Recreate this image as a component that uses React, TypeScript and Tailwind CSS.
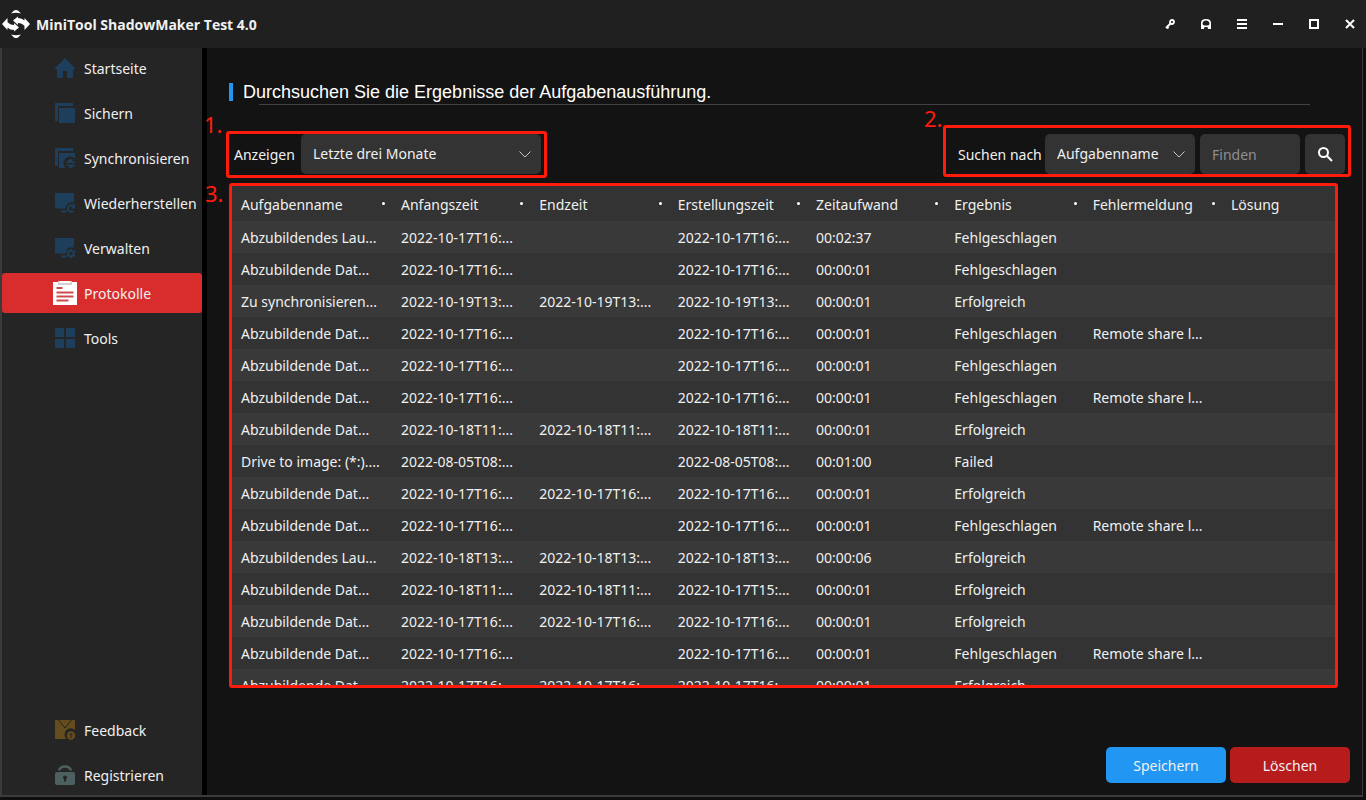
import type { ReactNode } from "react";

type NavItem = {
  label: string;
  icon: ReactNode;
  active?: boolean;
};

type LogRow = {
  name: string;
  start: string;
  end: string;
  created: string;
  duration: string;
  result: string;
  error: string;
};

const HomeIcon = () => (
  <svg viewBox="0 0 20 20" className="size-5 fill-[#1d3f5c]">
    <path d="M10 0 20 10V11H18V18.500Q18 20 16.500 20H12V13H8V20H3.500Q2 20 2 18.500V11H0V10Z" />
  </svg>
);

const BackupIcon = () => (
  <svg viewBox="0 0 20 20" className="size-5 fill-[#1d3f5c]">
    <path d="M0 0H18V3H3V18H0Z" />
    <path d="M4 5H20V20H4Z" />
  </svg>
);

const SyncIcon = () => (
  <svg viewBox="0 0 20 20" className="size-5 fill-[#1d3f5c]">
    <path d="M0 0H18V3H3V18H0Z" />
    <path d="M4 5H20V10.500A6 6 0 0 0 10.500 20H4Z" />
    <path d="M11.500 15A4.500 4.500 0 0 1 18 11.500L17 13.500H20V15Z" />
    <path d="M20 16.500A4.500 4.500 0 0 1 13.500 19.500L14.500 18H11.500V16.500Z" />
  </svg>
);

const RestoreIcon = () => (
  <svg viewBox="0 0 20 20" className="size-5 fill-[#1d3f5c]">
    <path d="M0 0H19V9.500A6.500 6.500 0 0 0 10.500 15.500H0Z" />
    <path d="M6 17.500H11.500V19.500H6Z" />
    <path
      d="M18.500 13.500A3.200 3.200 0 1 0 18.500 17.500M19.500 11V14.500H16.500"
      className="fill-none stroke-[#1d3f5c] stroke-2"
    />
  </svg>
);

const ManageIcon = () => (
  <svg viewBox="0 0 20 20" className="size-5 fill-[#1d3f5c]">
    <path d="M0 0H19V9.500A6.500 6.500 0 0 0 10.500 15.500H0Z" />
    <path d="M6 17.500H11.500V19.500H6Z" />
    <circle cx="16" cy="15.500" r="2.700" className="fill-none stroke-[#1d3f5c] stroke-2" />
    <path
      d="M16 11v1.500M16 18.500V20M12 13.200l1.400.8M18.600 17l1.400.8M12 17.800l1.400-.8M18.600 14l1.400-.8"
      className="stroke-[#1d3f5c] stroke-2"
    />
  </svg>
);

const LogsIcon = () => (
  <svg viewBox="0 0 24 24" className="size-6">
    <path d="M0 1H24V24H0Z" fill="#fff" />
    <path d="M5 0H7V2H17V0H19V4H5Z" fill="#d8d0d0" />
    <path d="M7 0H17V2H7Z" fill="#fff" />
    <path d="M3.500 7H9.500M3.500 11.500H20.500M3.500 15.500H20.500M3.500 19.500H15.500" stroke="#cf4b4b" strokeWidth="1.800" />
  </svg>
);

const ToolsIcon = () => (
  <svg viewBox="0 0 20 20" className="size-5 fill-[#1d3f5c]">
    <path d="M0 0H9V9H0ZM11 0H20V9H11ZM0 11H9V20H0ZM11 11H20V20H11Z" />
  </svg>
);

const FeedbackIcon = () => (
  <svg viewBox="0 0 20 20" className="size-5">
    <path d="M0 0H20V10A5.500 5.500 0 0 0 11.500 19H0Z" fill="#644c1d" />
    <path d="M3.500 0 10 8 16.500 0" fill="none" stroke="#252525" />
    <circle cx="16" cy="15.500" r="4.200" fill="#644c1d" />
    <path d="M16 18V13.500M14.500 15 16 13.500 17.500 15" fill="none" stroke="#252525" />
  </svg>
);

const RegisterIcon = () => (
  <svg viewBox="0 0 20 20" className="size-5">
    <path d="M4 5.500A6.200 5.200 0 0 1 16 5.500" fill="none" stroke="#4d6060" strokeWidth="2.500" />
    <rect y="7" width="20" height="13" rx="2" fill="#4d6060" />
    <circle cx="10" cy="12.500" r="2" fill="#252525" />
    <path d="M9 13H11V16.500H9Z" fill="#252525" />
  </svg>
);

const mainNav: NavItem[] = [
  { label: "Startseite", icon: <HomeIcon /> },
  { label: "Sichern", icon: <BackupIcon /> },
  { label: "Synchronisieren", icon: <SyncIcon /> },
  { label: "Wiederherstellen", icon: <RestoreIcon /> },
  { label: "Verwalten", icon: <ManageIcon /> },
  { label: "Protokolle", icon: <LogsIcon />, active: true },
  { label: "Tools", icon: <ToolsIcon /> },
];

const footerNav: NavItem[] = [
  { label: "Feedback", icon: <FeedbackIcon /> },
  { label: "Registrieren", icon: <RegisterIcon /> },
];

const columns = [
  "Aufgabenname",
  "Anfangszeit",
  "Endzeit",
  "Erstellungszeit",
  "Zeitaufwand",
  "Ergebnis",
  "Fehlermeldung",
  "Lösung",
];

const DRIVE = "Abzubildendes Lau...";
const FILES = "Abzubildende Dat...";
const OCT17 = "2022-10-17T16:...";
const REMOTE = "Remote share l...";

const rows: LogRow[] = [
  { name: DRIVE, start: OCT17, end: "", created: OCT17, duration: "00:02:37", result: "Fehlgeschlagen", error: "" },
  { name: FILES, start: OCT17, end: "", created: OCT17, duration: "00:00:01", result: "Fehlgeschlagen", error: "" },
  { name: "Zu synchronisieren...", start: "2022-10-19T13:...", end: "2022-10-19T13:...", created: "2022-10-19T13:...", duration: "00:00:01", result: "Erfolgreich", error: "" },
  { name: FILES, start: OCT17, end: "", created: OCT17, duration: "00:00:01", result: "Fehlgeschlagen", error: REMOTE },
  { name: FILES, start: OCT17, end: "", created: OCT17, duration: "00:00:01", result: "Fehlgeschlagen", error: "" },
  { name: FILES, start: OCT17, end: "", created: OCT17, duration: "00:00:01", result: "Fehlgeschlagen", error: REMOTE },
  { name: FILES, start: "2022-10-18T11:...", end: "2022-10-18T11:...", created: "2022-10-18T11:...", duration: "00:00:01", result: "Erfolgreich", error: "" },
  { name: "Drive to image: (*:)....", start: "2022-08-05T08:...", end: "", created: "2022-08-05T08:...", duration: "00:01:00", result: "Failed", error: "" },
  { name: FILES, start: OCT17, end: OCT17, created: OCT17, duration: "00:00:01", result: "Erfolgreich", error: "" },
  { name: FILES, start: OCT17, end: "", created: OCT17, duration: "00:00:01", result: "Fehlgeschlagen", error: REMOTE },
  { name: DRIVE, start: "2022-10-18T13:...", end: "2022-10-18T13:...", created: "2022-10-18T13:...", duration: "00:00:06", result: "Erfolgreich", error: "" },
  { name: FILES, start: "2022-10-18T11:...", end: "2022-10-18T11:...", created: "2022-10-17T15:...", duration: "00:00:01", result: "Erfolgreich", error: "" },
  { name: FILES, start: OCT17, end: OCT17, created: OCT17, duration: "00:00:01", result: "Erfolgreich", error: "" },
  { name: FILES, start: OCT17, end: "", created: OCT17, duration: "00:00:01", result: "Fehlgeschlagen", error: REMOTE },
  { name: FILES, start: OCT17, end: OCT17, created: OCT17, duration: "00:00:01", result: "Erfolgreich", error: "" },
];

function TitleBar() {
  const button = "flex h-12 w-9 items-center justify-center pl-1";
  return (
    <header className="flex h-12 shrink-0 items-center bg-[#202020]">
      <svg viewBox="0 0 28 28" className="ml-[2px] size-7 fill-white">
        <path d="M9 3.500 12 .5Q14-.5 16 .5L19 3.500Q14 2 9 3.500ZM9 24.500 12 27.500Q14 28.500 16 27.500L19 24.500Q14 26 9 24.500Z" />
        <path d="M0 14 5.500 8V12Q8 15 12 15V13L17 17.500 12 21.500V20Q8 20 5.500 17.500V20Z" />
        <path d="M28 14 22.500 20V16Q20 13 16 13V15L11 10.500 16 6.500V8Q20 8 22.500 10.500V8Z" />
      </svg>
      <h1 className="ml-[6px] pt-0.5 font-['Open_Sans',sans-serif] text-sm font-bold">
        MiniTool ShadowMaker Test 4.0
      </h1>
      <div className="ml-auto flex">
        <button type="button" aria-label="Lizenz" className={button}>
          <svg viewBox="0 0 10 10" className="size-[10px] fill-none stroke-white">
            <circle cx="7" cy="3" r="2" strokeWidth="1.800" />
            <path d="M5.500 4.500 1 9M2 8 3.500 9.500" strokeWidth="2" />
          </svg>
        </button>
        <button type="button" aria-label="Support" className={button}>
          <svg viewBox="0 0 10 10" className="size-[10px] fill-white">
            <path d="M0 10V4Q0 0 5 0T10 4V10H7L6.500 8H3.500L3 10ZM1.500 4.500Q1.500 6.500 3.500 6.500H6.500Q8.500 6.500 8.500 4.500 8 1.500 5 1.500T1.500 4.500Z" />
          </svg>
        </button>
        <button type="button" aria-label="Menü" className={button}>
          <svg viewBox="0 0 10 10" className="size-[10px] stroke-white stroke-2">
            <path d="M0 1H10M0 5H10M0 9H10" />
          </svg>
        </button>
        <button type="button" aria-label="Minimieren" className={button}>
          <svg viewBox="0 0 10 10" className="size-[10px] stroke-white stroke-2">
            <path d="M0 5H10" />
          </svg>
        </button>
        <button type="button" aria-label="Maximieren" className={button}>
          <svg viewBox="0 0 10 10" className="size-[10px] fill-none stroke-white stroke-2">
            <path d="M1 1H9V9H1Z" />
          </svg>
        </button>
        <button type="button" aria-label="Schließen" className={button}>
          <svg viewBox="0 0 10 10" className="size-[10px] stroke-white stroke-2">
            <path d="M1 1 9 9M9 1 1 9" />
          </svg>
        </button>
      </div>
    </header>
  );
}

function NavList({ items }: { items: NavItem[] }) {
  return (
    <ul className="flex flex-col gap-[5px]">
      {items.map((item) => (
        <li key={item.label}>
          <a
            href="#"
            aria-current={item.active ? "page" : undefined}
            className={`flex h-10 items-center gap-[7px] rounded-[3px] pl-[51px] whitespace-nowrap ${
              item.active ? "bg-[#d92d2d]" : ""
            }`}
          >
            <span className="flex w-6 shrink-0 justify-center">{item.icon}</span>
            <span className="pt-0.5">{item.label}</span>
          </a>
        </li>
      ))}
    </ul>
  );
}

const Chevron = () => (
  <svg
    viewBox="0 0 12 7"
    className="pointer-events-none absolute top-[17px] right-[10px] h-[7px] w-3 fill-none stroke-[#c8c8c8]"
  >
    <path d="M.5.500 6 6 11.500.500" />
  </svg>
);

function Marker({ text, className }: { text: string; className: string }) {
  return (
    <span className={`absolute text-[22px] leading-[26px] text-[#ff1c0c] ${className}`}>
      {text}
    </span>
  );
}

function Filters() {
  return (
    <div className="flex h-[53px] items-end justify-between pr-[11px] pl-[19px]">
      <div className="relative flex h-[47px] w-[321px] items-center rounded-[3px] border-3 border-[#ff1c0c] pr-[3px] pb-px pl-[5px]">
        <Marker text="1." className="-top-[23px] -left-[25px]" />
        <label htmlFor="range" className="w-[67px] shrink-0 pt-0.5">
          Anzeigen
        </label>
        <div className="relative grow">
          <select
            id="range"
            className="h-10 w-full appearance-none rounded-[5px] bg-[#333] px-3 outline-none"
          >
            <option>Letzte drei Monate</option>
          </select>
          <Chevron />
        </div>
      </div>
      <form className="relative flex h-[52px] w-[408px] items-end gap-[5px] self-start rounded-[3px] border-3 border-[#ff1c0c] pr-[3px] pl-3">
        <Marker text="2." className="-top-[23px] -left-[22px]" />
        <label htmlFor="field" className="w-[82px] shrink-0 self-center pt-2 whitespace-nowrap">
          Suchen nach
        </label>
        <div className="relative w-[150px] shrink-0">
          <select
            id="field"
            className="h-10 w-full appearance-none rounded-[5px] bg-[#333] px-3 outline-none"
          >
            <option>Aufgabenname</option>
          </select>
          <Chevron />
        </div>
        <input
          type="text"
          aria-label="Finden"
          placeholder="Finden"
          className="h-10 w-[100px] shrink-0 rounded-[5px] bg-[#333] px-3 outline-none placeholder:text-[#8f8f8f]"
        />
        <button
          type="button"
          aria-label="Suchen"
          className="flex size-10 shrink-0 items-center justify-center rounded-[5px] bg-[#333]"
        >
          <svg viewBox="0 0 16 16" className="size-4 fill-none stroke-white stroke-2">
            <circle cx="6.500" cy="6.500" r="4.500" />
            <path d="M9.800 9.800 15 15" />
          </svg>
        </button>
      </form>
    </div>
  );
}

function LogTable() {
  return (
    <div className="relative mt-[5px] mr-[24px] ml-[22px]">
      <Marker text="3." className="-top-[3px] -left-[24px]" />
      <div className="h-[505px] overflow-hidden rounded-[3px] border-3 border-[#ff1c0c]">
        <table className="w-full table-fixed border-collapse text-left">
          <colgroup>
            <col className="w-[160px]" />
            <col span={6} />
            <col className="w-[113px]" />
          </colgroup>
          <thead>
            <tr className="h-[35px] bg-[#333]">
              {columns.map((column, index) => (
                <th key={column} scope="col" className="p-0 pr-[7px] pl-[9px] font-normal">
                  <div className="flex items-center justify-between">
                    <span className="pt-0.5">{column}</span>
                    {index < columns.length - 1 && <span className="size-[3px] rounded-full bg-white" />}
                  </div>
                </th>
              ))}
            </tr>
          </thead>
          <tbody>
            {rows.map((row, index) => (
              <tr key={index} className="h-8 odd:bg-[#393939] even:bg-[#333]">
                {[row.name, row.start, row.end, row.created, row.duration, row.result, row.error, ""].map(
                  (cell, cellIndex) => (
                    <td key={cellIndex} className="p-0 pt-0.5 pl-[9px] whitespace-nowrap">
                      {cell}
                    </td>
                  ),
                )}
              </tr>
            ))}
          </tbody>
        </table>
      </div>
    </div>
  );
}

export default function App() {
  return (
    <div className="flex h-screen flex-col bg-[#0f0f0f] font-['Noto_Sans','Open_Sans',sans-serif] text-sm leading-5 text-[#f0f0f0]">
      <TitleBar />
      <div className="mr-[3px] mb-[3px] flex min-h-0 grow border-r border-b-2 border-l-2 border-[#3b3b3b]">
        <nav className="flex w-[200px] shrink-0 flex-col justify-between bg-[#252525]">
          <NavList items={mainNav} />
          <NavList items={footerNav} />
        </nav>
        <main className="flex min-w-0 grow flex-col border-l-5 border-black bg-[#131313]">
          <div className="mt-[35px] mr-[52px] ml-[22px] flex h-[18px] items-center border-l-4 border-[#2196f3] pl-[10px]">
            <h2 className="font-['Liberation_Sans',sans-serif] text-lg leading-[18px] text-white">
              Durchsuchen Sie die Ergebnisse der Aufgabenausführung.
            </h2>
          </div>
          <hr className="mt-[3px] mr-[52px] mb-[20px] ml-[52px] border-[#414141]" />
          <Filters />
          <LogTable />
          <div className="mt-auto mr-[12px] mb-[12px] flex justify-end gap-1">
            <button type="button" className="h-9 w-[120px] rounded-[5px] bg-[#2196f3] pt-0.5">
              Speichern
            </button>
            <button type="button" className="h-9 w-[120px] rounded-[5px] bg-[#b71c1c] pt-0.5">
              Löschen
            </button>
          </div>
        </main>
      </div>
    </div>
  );
}
